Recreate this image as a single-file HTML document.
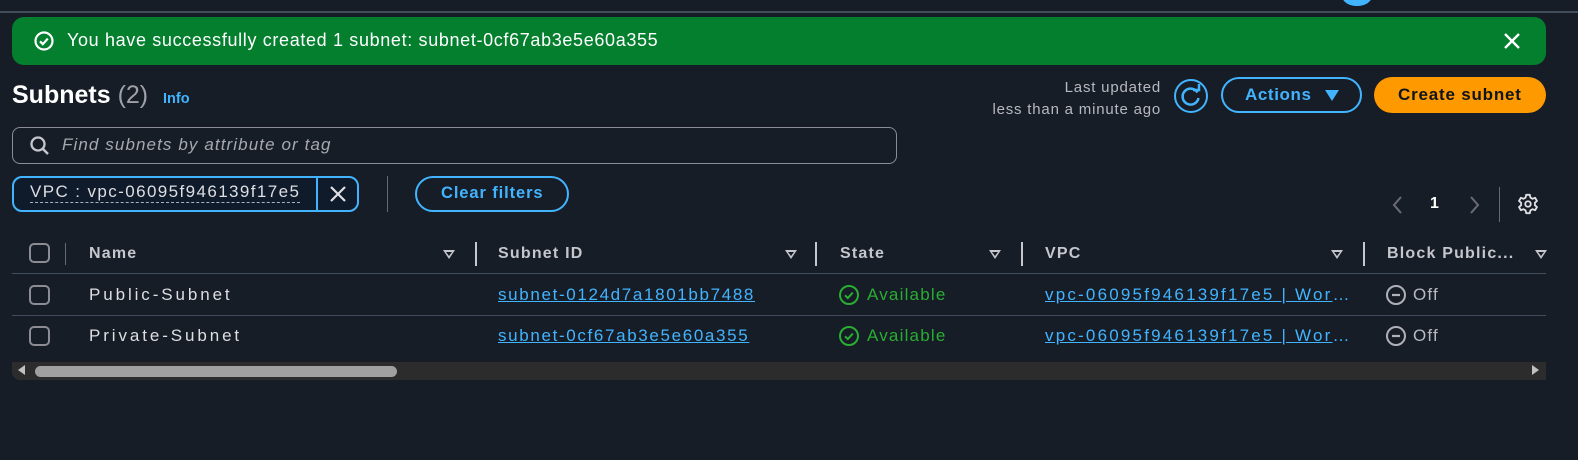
<!DOCTYPE html>
<html><head><meta charset="utf-8"><style>
*{box-sizing:border-box;margin:0;padding:0}
body{width:1578px;height:460px;background:#161d26;font-family:"Liberation Sans",sans-serif;color:#dedee3;position:relative;overflow:hidden}
.a{position:absolute;white-space:nowrap}
.hdr{font-weight:bold;font-size:16px;color:#c6c6cd;letter-spacing:1.2px}
.cb{position:absolute;width:21px;height:20px;border:2px solid #8c8c94;border-radius:5px}
.tri{position:absolute;width:0;height:0;border-left:6px solid transparent;border-right:6px solid transparent;border-top:9px solid #c6c6cd}
.tri:after{content:"";position:absolute;left:-3px;top:-7px;border-left:3px solid transparent;border-right:3px solid transparent;border-top:4px solid #161d26}
.sep{position:absolute;width:2px;height:24px;background:#c6c6cd;top:242px}
.link{color:#42b4ff;text-decoration:underline;font-size:17px;letter-spacing:1.65px}
.cell{font-size:17px;letter-spacing:1.2px}
.nm{font-size:17px;letter-spacing:2.9px}
.vl{color:#42b4ff;text-decoration:underline;font-size:17px;letter-spacing:2.2px}
</style></head><body>
<div class="a" style="left:0;top:11px;width:1578px;height:2px;background:#414d5c"></div>
<div class="a" style="left:1342px;top:-14px;width:30px;height:20px;border-radius:50%;background:#42b4ff"></div>

<div class="a" style="left:12px;top:17px;width:1534px;height:48px;border-radius:12px;background:#037f2e"></div>
<svg class="a" style="left:33px;top:30px" width="22" height="22" viewBox="0 0 22 22"><circle cx="11" cy="11" r="8.5" fill="none" stroke="#fff" stroke-width="2.2"/><path d="M7 11.3l2.8 2.8 5-5.5" fill="none" stroke="#fff" stroke-width="2.2"/></svg>
<div class="a" style="left:67px;top:30px;font-size:18px;color:#fff;letter-spacing:0.65px">You have successfully created 1 subnet: subnet-0cf67ab3e5e60a355</div>
<svg class="a" style="left:1502px;top:31px" width="20" height="20"><path d="M3 3l14 14M17 3L3 17" stroke="#fff" stroke-width="2.4"/></svg>

<div class="a" style="left:12px;top:81px;font-size:25px;font-weight:bold;color:#fff;letter-spacing:0px">Subnets <span style="font-weight:normal;color:#a0a0a8">(2)</span></div>
<div class="a" style="left:163px;top:91px;font-size:14.5px;font-weight:bold;color:#42b4ff">Info</div>

<div class="a" style="right:417px;top:77px;font-size:15px;color:#b8b8c0;text-align:right;line-height:22px;letter-spacing:0.8px">Last updated<br>less than a minute ago</div>
<svg class="a" style="left:1173px;top:78px" width="36" height="36"><circle cx="18" cy="18" r="16" fill="none" stroke="#42b4ff" stroke-width="2"/><path d="M24.5 14.5A8 8 0 1 0 25.5 20" fill="none" stroke="#42b4ff" stroke-width="2.5"/><path d="M20 12h6v-6" fill="none" stroke="#42b4ff" stroke-width="2.5"/></svg>
<div class="a" style="left:1221px;top:77px;width:141px;height:36px;border:2px solid #42b4ff;border-radius:20px"></div>
<div class="a" style="left:1245px;top:85px;font-size:17px;font-weight:bold;color:#42b4ff;letter-spacing:0.6px">Actions</div>
<div class="a" style="left:1325px;top:90px;border-left:7px solid transparent;border-right:7px solid transparent;border-top:11px solid #42b4ff"></div>
<div class="a" style="left:1374px;top:77px;width:172px;height:36px;border-radius:20px;background:#ff9900"></div>
<div class="a" style="left:1398px;top:85px;font-size:17px;font-weight:bold;color:#0f141a;letter-spacing:0.8px">Create subnet</div>

<div class="a" style="left:12px;top:127px;width:885px;height:37px;border:1.5px solid #8c8c94;border-radius:8px"></div>
<svg class="a" style="left:29px;top:135px" width="22" height="22"><circle cx="9" cy="9" r="6.5" fill="none" stroke="#c6c6cd" stroke-width="2.3"/><path d="M14 14l5 5" stroke="#c6c6cd" stroke-width="2.5"/></svg>
<div class="a" style="left:62px;top:135px;font-size:17px;font-style:italic;color:#a8a8b0;letter-spacing:1.1px">Find subnets by attribute or tag</div>

<div class="a" style="left:12px;top:176px;width:347px;height:36px;border:2px solid #42b4ff;border-radius:10px;background:#0f1b2a"></div>
<div class="a" style="left:316px;top:177px;width:2px;height:34px;background:#42b4ff"></div>
<div class="a" style="left:30px;top:182px;font-size:17px;color:#dedee3;border-bottom:1px dashed #b0b0b8;letter-spacing:1.4px;line-height:20px">VPC : vpc-06095f946139f17e5</div>
<svg class="a" style="left:328px;top:184px" width="20" height="20"><path d="M3 3l14 14M17 3L3 17" stroke="#e0e0e5" stroke-width="2.2"/></svg>
<div class="a" style="left:387px;top:176px;width:1px;height:36px;background:#5f6b7a"></div>
<div class="a" style="left:415px;top:176px;width:154px;height:36px;border:2px solid #42b4ff;border-radius:20px"></div>
<div class="a" style="left:441px;top:184px;font-size:16.5px;font-weight:bold;color:#42b4ff;letter-spacing:0.9px">Clear filters</div>

<svg class="a" style="left:1390px;top:195px" width="16" height="20"><path d="M11 2L4 10l7 8" fill="none" stroke="#6b6b73" stroke-width="2"/></svg>
<div class="a" style="left:1430px;top:195px;font-size:16px;font-weight:bold;color:#fff">1</div>
<svg class="a" style="left:1466px;top:195px" width="16" height="20"><path d="M5 2l7 8-7 8" fill="none" stroke="#6b6b73" stroke-width="2"/></svg>
<div class="a" style="left:1499px;top:187px;width:1px;height:35px;background:#5f6b7a"></div>
<svg class="a" style="left:1517px;top:193px" width="22" height="22" viewBox="0 0 24 24"><path d="M10 2h4l.6 3 2.3 1.3 2.9-1 2 3.4-2.3 2v2.6l2.3 2-2 3.4-2.9-1L14.6 19l-.6 3h-4l-.6-3-2.3-1.3-2.9 1-2-3.4 2.3-2v-2.6l-2.3-2 2-3.4 2.9 1L9.4 5z" fill="none" stroke="#e0e0e5" stroke-width="2" stroke-linejoin="round"/><circle cx="12" cy="12" r="3" fill="none" stroke="#e0e0e5" stroke-width="2"/></svg>

<div class="cb" style="left:29px;top:243px"></div>
<div class="a" style="left:65px;top:243px;width:1px;height:22px;background:#5f6b7a"></div>
<div class="a hdr" style="left:89px;top:245px">Name</div><div class="tri" style="left:443px;top:250px"></div><div class="sep" style="left:475px"></div>
<div class="a hdr" style="left:498px;top:245px">Subnet ID</div><div class="tri" style="left:785px;top:250px"></div><div class="sep" style="left:815px"></div>
<div class="a hdr" style="left:840px;top:245px">State</div><div class="tri" style="left:989px;top:250px"></div><div class="sep" style="left:1021px"></div>
<div class="a hdr" style="left:1045px;top:245px">VPC</div><div class="tri" style="left:1331px;top:250px"></div><div class="sep" style="left:1363px"></div>
<div class="a hdr" style="left:1387px;top:245px">Block Public...</div><div class="tri" style="left:1535px;top:250px"></div>
<div class="a" style="left:12px;top:273px;width:1534px;height:1px;background:#414d5c"></div>
<div class="a" style="left:12px;top:315px;width:1534px;height:1px;background:#414d5c"></div>

<div class="cb" style="left:29px;top:285px"></div>
<div class="a nm" style="left:89px;top:285px">Public-Subnet</div>
<div class="a link" style="left:498px;top:285px">subnet-0124d7a1801bb7488</div>
<svg class="a" style="left:838px;top:284px" width="22" height="22"><circle cx="11" cy="11" r="9" fill="none" stroke="#29ad32" stroke-width="2"/><path d="M7 11.3l2.8 2.8 5-5.5" fill="none" stroke="#29ad32" stroke-width="2"/></svg>
<div class="a cell" style="left:867px;top:285px;color:#29ad32">Available</div>
<div class="a" style="left:1045px;top:285px"><span class="vl">vpc-06095f946139f17e5 | Wor</span><span style="font-size:17px;color:#42b4ff">…</span></div>
<svg class="a" style="left:1385px;top:284px" width="22" height="22"><circle cx="11" cy="11" r="9" fill="none" stroke="#b0b0b8" stroke-width="2"/><path d="M7 11h8" stroke="#b0b0b8" stroke-width="2.2"/></svg>
<div class="a cell" style="left:1413px;top:285px;color:#b8b8c0">Off</div>

<div class="cb" style="left:29px;top:326px"></div>
<div class="a nm" style="left:89px;top:326px">Private-Subnet</div>
<div class="a link" style="left:498px;top:326px">subnet-0cf67ab3e5e60a355</div>
<svg class="a" style="left:838px;top:325px" width="22" height="22"><circle cx="11" cy="11" r="9" fill="none" stroke="#29ad32" stroke-width="2"/><path d="M7 11.3l2.8 2.8 5-5.5" fill="none" stroke="#29ad32" stroke-width="2"/></svg>
<div class="a cell" style="left:867px;top:326px;color:#29ad32">Available</div>
<div class="a" style="left:1045px;top:326px"><span class="vl">vpc-06095f946139f17e5 | Wor</span><span style="font-size:17px;color:#42b4ff">…</span></div>
<svg class="a" style="left:1385px;top:325px" width="22" height="22"><circle cx="11" cy="11" r="9" fill="none" stroke="#b0b0b8" stroke-width="2"/><path d="M7 11h8" stroke="#b0b0b8" stroke-width="2.2"/></svg>
<div class="a cell" style="left:1413px;top:326px;color:#b8b8c0">Off</div>

<div class="a" style="left:12px;top:362px;width:1534px;height:18px;background:#2c2c2c;border-bottom-left-radius:8px"></div>
<div class="a" style="left:18px;top:365px;border-top:5px solid transparent;border-bottom:5px solid transparent;border-right:7px solid #c0c0c0"></div>
<div class="a" style="left:35px;top:366px;width:362px;height:11px;border-radius:6px;background:#a0a0a0"></div>
<div class="a" style="left:1532px;top:365px;border-top:5px solid transparent;border-bottom:5px solid transparent;border-left:7px solid #c0c0c0"></div>
</body></html>
